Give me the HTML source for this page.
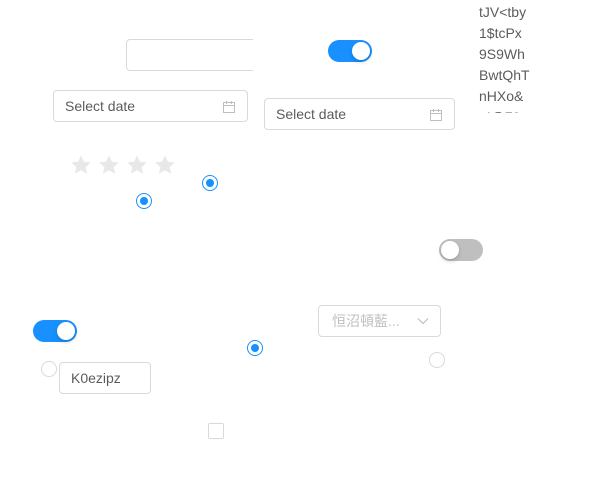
<!DOCTYPE html>
<html><head><meta charset="utf-8"><style>
body{margin:0;width:599px;height:488px;background:#fff;position:relative;overflow:hidden;font-family:"Liberation Sans","Noto Sans CJK TC",sans-serif;font-size:14px;color:rgba(0,0,0,.65)}
.a{position:absolute;box-sizing:border-box}
.inp{border:1px solid #d9d9d9;border-radius:4px;background:#fff}
.tog{width:44px;height:22px;border-radius:11px;background:#1890ff}
.tog::after{content:"";position:absolute;top:2px;left:24px;width:18px;height:18px;border-radius:50%;background:#fff;box-shadow:0 2px 4px rgba(0,35,11,.2)}
.tog.off{background:#bfbfbf}.tog.off::after{left:2px}
.rad{width:16px;height:16px;border-radius:50%;border:1px solid #1890ff;background:#fff}
.rad::after{content:"";position:absolute;left:3px;top:3px;width:8px;height:8px;border-radius:50%;background:#1890ff}
.rad.un{border-color:#d9d9d9}.rad.un::after{display:none}
.txt{line-height:30px;padding-left:11px}
</style></head><body>
<div class="a inp" style="left:126px;top:39px;width:150px;height:32px"></div>
<div class="a" style="left:253px;top:30px;width:30px;height:50px;background:#fff"></div>
<div class="a inp txt" style="left:53px;top:90px;width:195px;height:32px">Select date
<svg class="a" style="left:168px;top:9px" width="14" height="14" viewBox="0 0 14 14" fill="none" stroke="#bfbfbf" stroke-width="1"><rect x="1.5" y="2.5" width="11" height="10"/><path d="M1.5 5.5h11M4.5 1v3M9.5 1v3"/></svg></div>
<div class="a inp txt" style="left:264px;top:98px;width:191px;height:32px">Select date
<svg class="a" style="left:164px;top:9px" width="14" height="14" viewBox="0 0 14 14" fill="none" stroke="#bfbfbf" stroke-width="1"><rect x="1.5" y="2.5" width="11" height="10"/><path d="M1.5 5.5h11M4.5 1v3M9.5 1v3"/></svg></div>
<div class="a tog" style="left:328px;top:40px"></div>
<div class="a" style="left:479px;top:2px;width:80px;height:111px;overflow:hidden;line-height:21px;font-size:14px">tJV&lt;tby<br>1$tcPx<br>9S9Wh<br>BwtQhT<br>nHXo&amp;<br>a!@79</div>
<svg class="a" style="left:70px;top:154px" width="110" height="22" viewBox="0 0 110 22" fill="#e8e8e8">
<g id="s"><path d="M11 1.5l2.9 6.3 6.8.7-5.1 4.6 1.5 6.7L11 16.3l-6.1 3.5 1.5-6.7L1.3 8.5l6.8-.7z"/></g>
<use href="#s" x="28"/><use href="#s" x="56"/><use href="#s" x="84"/></svg>
<div class="a rad" style="left:202px;top:175px"></div>
<div class="a rad" style="left:136px;top:193px"></div>
<div class="a tog off" style="left:439px;top:239px"></div>
<div class="a tog" style="left:33px;top:320px"></div>
<div class="a inp" style="left:318px;top:305px;width:123px;height:32px;color:#bfbfbf;line-height:30px;padding-left:13px">恒沼頓藍...
<svg class="a" style="left:98px;top:11px" width="12" height="8" viewBox="0 0 12 8" fill="none" stroke="#bfbfbf" stroke-width="1.2"><path d="M1 1.5l5 5 5-5"/></svg></div>
<div class="a rad" style="left:247px;top:340px"></div>
<div class="a rad un" style="left:41px;top:361px"></div>
<div class="a rad un" style="left:429px;top:352px"></div>
<div class="a inp txt" style="left:59px;top:362px;width:92px;height:32px">K0ezipz</div>
<div class="a" style="left:208px;top:423px;width:16px;height:16px;border:1px solid #d9d9d9;border-radius:2px"></div>
</body></html>
